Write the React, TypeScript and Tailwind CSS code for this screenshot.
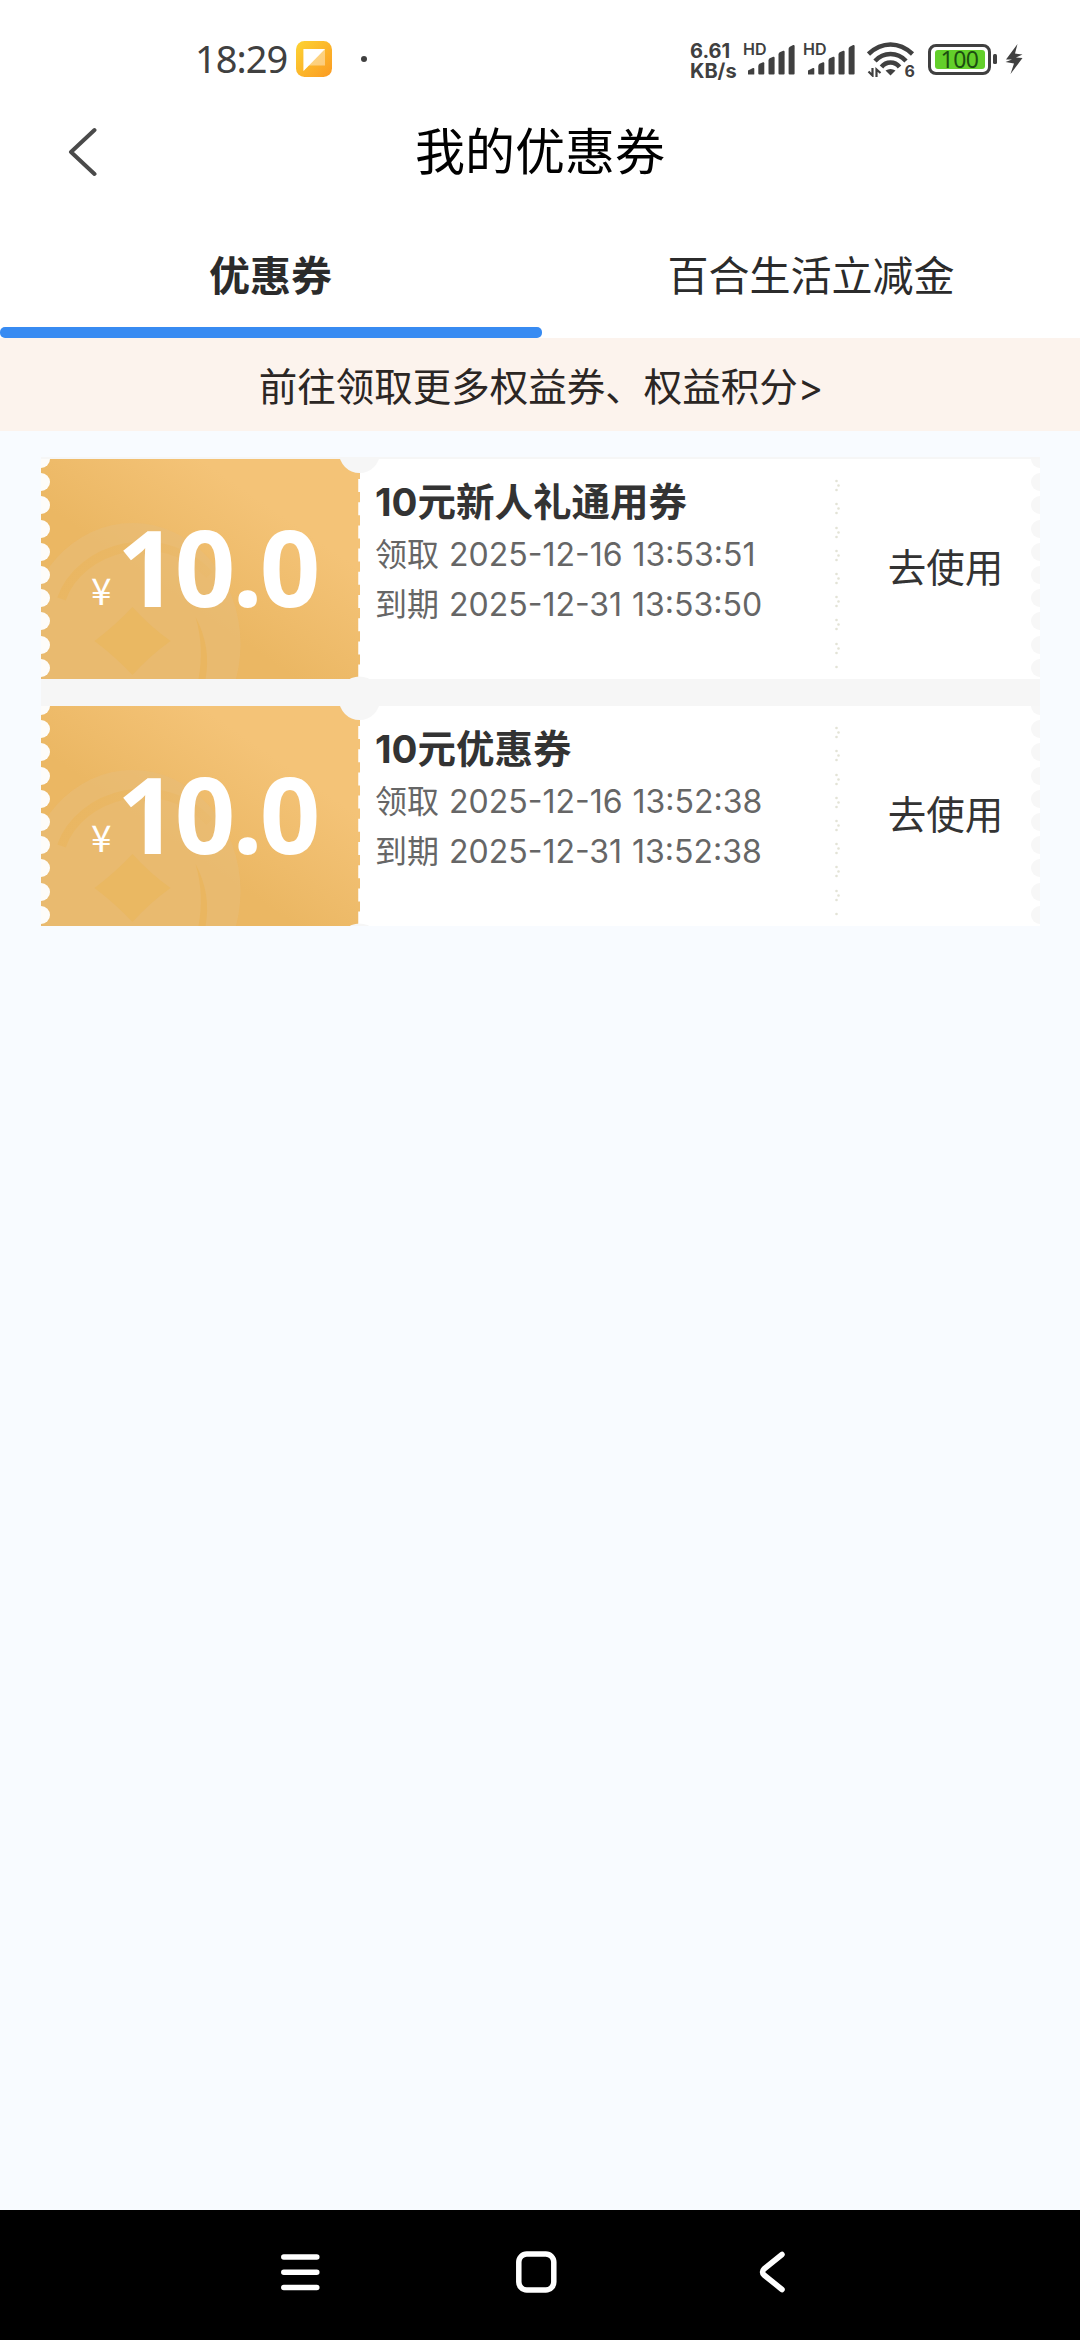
type Coupon = {
  id: number;
  amount: string;
  title: string;
  received: string;
  expires: string;
};

const coupons: Coupon[] = [
  {
    id: 1,
    amount: "10.0",
    title: "10元新人礼通用券",
    received: "2025-12-16 13:53:51",
    expires: "2025-12-31 13:53:50",
  },
  {
    id: 2,
    amount: "10.0",
    title: "10元优惠券",
    received: "2025-12-16 13:52:38",
    expires: "2025-12-31 13:52:38",
  },
];

// vertical centers of the perforations along a ticket edge
const notches = [0, 23, 46, 70, 93, 116, 139, 162, 186, 209];

function SignalBars() {
  return (
    <div className="relative h-[34px] w-[50px]">
      <span className="absolute -left-[2px] top-0 text-[16px] font-semibold leading-[15px]">
        HD
      </span>
      <svg viewBox="0 0 50 34" className="absolute inset-0" fill="#404040">
        <path d="M3 32V28.5L8 26Q9.300 25.500 9.300 27V32Q9.300 32.500 8.500 32.500H3.500Q3 32.500 3 32Z" />
        <path d="M13.300 24Q13.300 22.500 14.500 21.700L18 20.300Q19.300 20 19.300 21.300V31.500Q19.300 32.500 18.300 32.500H14.300Q13.300 32.500 13.300 31.500Z" />
        <path d="M23.500 18.500Q23.500 17 24.700 16.200L28.200 14.700Q29.600 14.400 29.600 15.700V31.500Q29.600 32.500 28.600 32.500H24.500Q23.500 32.500 23.500 31.500Z" />
        <path d="M33.500 12.500Q33.500 11 34.700 10.200L38.200 8.700Q39.600 8.400 39.600 9.700V31.500Q39.600 32.500 38.600 32.500H34.500Q33.500 32.500 33.500 31.500Z" />
        <path d="M43.600 7Q43.600 5.500 44.800 4.700L48.200 3Q49.600 2.700 49.600 4V31.500Q49.600 32.500 48.600 32.500H44.600Q43.600 32.500 43.600 31.500Z" />
      </svg>
    </div>
  );
}

function WifiIcon() {
  return (
    <div className="relative h-9 w-[48px]">
      <svg
        viewBox="0 0 48 36"
        className="absolute inset-0"
        fill="none"
        stroke="#404040"
        strokeWidth="4.500"
      >
        <path d="M1.500 13Q11.500 3.500 23.500 3.500T45.500 13" />
        <path d="M8 20Q14.500 13 23.500 13T39 20" />
        <path d="M14.500 26Q18 21.500 23.500 21.500T32.500 26" />
        <path
          d="M18.500 29.500Q23.500 26.500 28.500 29.500L23.500 34.500Z"
          fill="#404040"
          stroke="none"
        />
        <path
          d="M5.500 27V34.500L1.500 30.500M9.500 36V28.500L13.500 32"
          strokeWidth="2.200"
        />
      </svg>
      <span className="absolute right-0 top-[22px] text-[16px] font-bold leading-4">
        6
      </span>
    </div>
  );
}

function StatusBar() {
  return (
    <div className="flex h-[118px] items-center pl-[195px] pr-[57px] font-['Inter','Noto_Sans_CJK_SC',sans-serif] text-[#404040]">
      <span className="w-[101px] whitespace-nowrap pb-[3px] font-['Noto_Sans',sans-serif] text-[38px] leading-none tracking-[-1px]">
        18:29
      </span>
      <svg viewBox="0 0 36 36" className="h-9 w-9 shrink-0">
        <defs>
          <linearGradient id="note" x1="0" y1="0" x2="1" y2="1">
            <stop offset="0" stopColor="#fdd433" />
            <stop offset="1" stopColor="#fb9a22" />
          </linearGradient>
        </defs>
        <rect width="36" height="36" rx="8.500" fill="url(#note)" />
        <path d="M7.500 8H29V24.500H12L7.500 30Z" fill="#fff" fillOpacity="0.4" />
        <path d="M7.500 8H29L7.500 30Z" fill="#fff" />
      </svg>
      <span className="ml-[29px] h-[6px] w-[6px] rounded-full bg-[#404040]" />
      <div className="ml-auto flex items-center">
        <div className="mr-[6px] w-[49px] whitespace-nowrap pt-[3px] text-[20px] font-bold leading-[20px]">
          <div>6.61</div>
          <div>KB/s</div>
        </div>
        <SignalBars />
        <div className="w-[10px]" />
        <SignalBars />
        <div className="w-[12px]" />
        <WifiIcon />
        <div className="ml-[13px] flex h-[31px] w-[63px] items-center justify-center rounded-[8px] border-3 border-[#404040]">
          <div className="flex h-[19px] w-[50px] items-center justify-center rounded-[3px] bg-[#63cf2a] font-['Noto_Sans',sans-serif] text-[23px] leading-none tracking-[-0.5px] text-[#1b4d10]">
            100
          </div>
        </div>
        <div className="ml-[2px] h-[10px] w-[4px] rounded-[1.500px] bg-[#404040]" />
        <svg viewBox="0 0 18 30" className="ml-2 h-[30px] w-[18px]" fill="#404040">
          <path d="M12.500 0L1 15.500H7L0.500 18L9 19.500L5.500 30L17.500 14L11 13.500L17.500 10.500L10 9.500Z" />
        </svg>
      </div>
    </div>
  );
}

function TicketEdges() {
  return (
    <svg viewBox="0 0 999 220" className="absolute inset-0 h-full w-full">
      {notches.map((y) => (
        <g key={y}>
          <circle cx="0" cy={y} r="9" fill="#fdfcfa" />
          <circle cx="999" cy={y} r="9" fill="#f7f7f7" />
        </g>
      ))}
      {notches.slice(1).map((y) => (
        <g key={y} fill="#e3e3d6">
          <circle cx="795.500" cy={y - 1} r="1.300" />
          {y < 209 && (
            <>
              <circle cx="797.500" cy={y + 3.5} r="1.300" />
              <circle cx="795.500" cy={y + 8} r="1.300" />
            </>
          )}
        </g>
      ))}
      <path
        d="M318.500 20V220"
        stroke="#fff"
        strokeWidth="2.500"
        strokeDasharray="13 10.200"
      />
      <circle cx="318.500" cy="-6.500" r="20.500" fill="#f6f6f6" />
      <circle cx="318.500" cy="238" r="20.500" fill="#f6f6f6" />
    </svg>
  );
}

function Coin() {
  return (
    <svg
      viewBox="0 0 318 220"
      className="absolute inset-0 h-full w-full"
      fill="none"
    >
      <defs>
        <linearGradient id="ring" x1="0" y1="0" x2="1" y2="0.3">
          <stop offset="0" stopColor="#eab660" />
          <stop offset="1" stopColor="#eab660" stopOpacity="0.2" />
        </linearGradient>
      </defs>
      <ellipse cx="91" cy="185" rx="108" ry="121" fill="#e7bd78" fillOpacity="0.6" />
      <path
        d="M20 140C38 88 120 64 168 116"
        stroke="url(#ring)"
        strokeWidth="9"
      />
      <path
        d="M154 158Q170 188 164 220H157Q163 188 154 158Z"
        fill="#eab660"
      />
      <path
        d="M91 148Q108 167 129 182Q108 197 91 216Q73 197 53 182Q73 167 91 148Z"
        fill="#eab862"
      />
    </svg>
  );
}

function CouponCard({ coupon }: { coupon: Coupon }) {
  return (
    <div className="relative flex h-[220px] bg-white">
      <div className="relative w-[319px] shrink-0 overflow-hidden bg-linear-to-tr from-[#ebb763] from-40% to-[#f4c377] to-75%">
        <Coin />
        <div className="relative flex h-full items-baseline pl-[50px] pt-[32px] text-white">
          <span className="relative -top-[2px] w-[26px] font-['Noto_Sans_CJK_SC',sans-serif] text-[37px] leading-none">
            ¥
          </span>
          <span className="font-['Noto_Sans',sans-serif] text-[106px] font-bold leading-[150px] tracking-[-2.800px]">
            {coupon.amount}
          </span>
        </div>
      </div>
      <div className="flex-1 pl-[15px] pt-[15px]">
        <h2 className="text-[38.500px] font-bold leading-[56px] text-[#333]">
          {coupon.title}
        </h2>
        <p className="whitespace-nowrap text-[32px] leading-[50px] text-[#666] [word-spacing:1px]">
          领取 {coupon.received}
        </p>
        <p className="whitespace-nowrap text-[32px] leading-[50px] text-[#666] [word-spacing:1px]">
          到期 {coupon.expires}
        </p>
      </div>
      <button
        type="button"
        className="w-[193px] shrink-0 pl-1 text-center text-[38.500px] text-[#333]"
      >
        去使用
      </button>
      <TicketEdges />
    </div>
  );
}

export default function App() {
  return (
    <div className="flex h-[2340px] w-[1080px] flex-col overflow-hidden bg-[#f8fbff] font-['Inter','Noto_Sans_CJK_SC',sans-serif]">
      <header className="bg-white">
        <StatusBar />
        <div className="grid h-[68px] grid-cols-[1fr_auto_1fr] items-center">
          <svg
            viewBox="0 0 30 50"
            className="ml-[67px] h-[50px] w-[30px]"
            fill="none"
            stroke="#4a4a4a"
            strokeWidth="4"
            strokeLinecap="round"
            strokeLinejoin="round"
          >
            <path d="M27.500 3L4 25L27.500 47" />
          </svg>
          <h1 className="text-[50px] leading-none text-black">我的优惠券</h1>
        </div>
        <nav className="grid h-[152px] grid-cols-2 text-[41px] text-[#2b2b2b]">
          <button type="button" className="flex flex-col items-center">
            <span className="flex-1 pl-px pt-[60px] font-bold leading-[60px]">
              优惠券
            </span>
            <span className="h-[11px] w-[542px] self-start rounded-[5px] bg-[#388bf2]" />
          </button>
          <button
            type="button"
            className="self-start pl-[2px] pt-[60px] leading-[60px]"
          >
            百合生活立减金
          </button>
        </nav>
      </header>
      <a className="flex h-[93px] items-center justify-center bg-[#fcf3ed] pl-[2px] pt-[6px] text-[38.500px] text-[#2b2624]">
        前往领取更多权益券、权益积分&gt;
      </a>
      <main className="flex-1 px-[41px] pt-[26px]">
        <div className="w-[999px] space-y-[27px] bg-[#f6f6f6] pt-[2px]">
          {coupons.map((coupon) => (
            <CouponCard key={coupon.id} coupon={coupon} />
          ))}
        </div>
      </main>
      <footer className="flex h-[130px] items-center bg-black pl-[281px]">
        <svg
          viewBox="0 0 504 42"
          className="mb-[7px] h-[42px] w-[504px]"
          fill="none"
          stroke="#fff"
          strokeWidth="5.500"
          strokeLinecap="round"
          strokeLinejoin="round"
        >
          <path d="M2.800 6H35.800M2.800 21.300H35.800M2.800 36.500H35.800" />
          <rect x="237.800" y="3" width="35" height="36" rx="8" />
          <path d="M501 3.500L483 18Q480 21 483 24L501 38.500" />
        </svg>
      </footer>
    </div>
  );
}
